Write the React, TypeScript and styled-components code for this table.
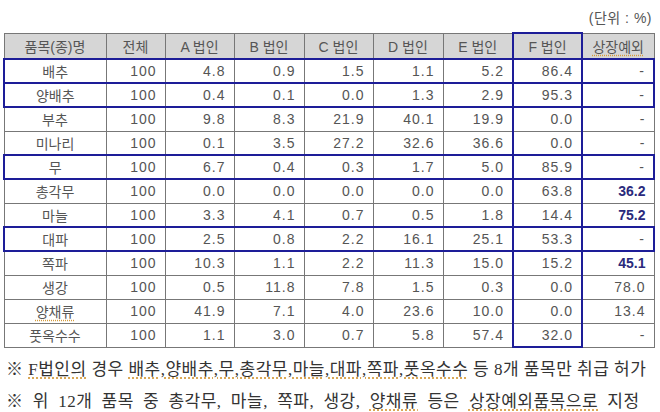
import React from 'react'
import styled, { createGlobalStyle } from 'styled-components'

type Row = {
    name: string
    vals: string[]
    hl?: boolean
    bold?: boolean
    squiggle?: boolean
}

const widths = [102, 59, 69, 70, 69, 70, 70, 69, 72]
const heads = ['품목(종)명', '전체', 'A 법인', 'B 법인', 'C 법인', 'D 법인', 'E 법인', 'F 법인', '상장예외']

const rows: Row[] = [
    { name: '배추', vals: ['100', '4.8', '0.9', '1.5', '1.1', '5.2', '86.4', '-'], hl: true },
    { name: '양배추', vals: ['100', '0.4', '0.1', '0.0', '1.3', '2.9', '95.3', '-'], hl: true },
    { name: '부추', vals: ['100', '9.8', '8.3', '21.9', '40.1', '19.9', '0.0', '-'] },
    { name: '미나리', vals: ['100', '0.1', '3.5', '27.2', '32.6', '36.6', '0.0', '-'] },
    { name: '무', vals: ['100', '6.7', '0.4', '0.3', '1.7', '5.0', '85.9', '-'], hl: true },
    { name: '총각무', vals: ['100', '0.0', '0.0', '0.0', '0.0', '0.0', '63.8', '36.2'], bold: true },
    { name: '마늘', vals: ['100', '3.3', '4.1', '0.7', '0.5', '1.8', '14.4', '75.2'], bold: true },
    { name: '대파', vals: ['100', '2.5', '0.8', '2.2', '16.1', '25.1', '53.3', '-'], hl: true },
    { name: '쪽파', vals: ['100', '10.3', '1.1', '2.2', '11.3', '15.0', '15.2', '45.1'], bold: true },
    { name: '생강', vals: ['100', '0.5', '11.8', '7.8', '1.5', '0.3', '0.0', '78.0'] },
    { name: '양채류', vals: ['100', '41.9', '7.1', '4.0', '23.6', '10.0', '0.0', '13.4'], squiggle: true },
    { name: '풋옥수수', vals: ['100', '1.1', '3.0', '0.7', '5.8', '57.4', '32.0', '-'] },
]

const BLUE = '#1d1d98'

const App = () => {
    return (
        <>
            <GlobalStyle />
            <Page>
                <UnitLine>(단위 : %)</UnitLine>
                <Table>
                    <colgroup>
                        {widths.map((w, i) => <col key={i} style={{ width: w }} />)}
                    </colgroup>
                    <thead>
                        <tr>
                            {heads.map((h, i) => (
                                <HeadCell key={h} $f={i === 7}>
                                    {i === 8 ? <Squiggle>{h}</Squiggle> : h}
                                </HeadCell>
                            ))}
                        </tr>
                    </thead>
                    <tbody>
                        {rows.map((r, ri) => (
                            <BodyRow key={r.name}>
                                <Cell $align='center' $hl={r.hl} $first>
                                    {r.squiggle ? <Squiggle>{r.name}</Squiggle> : r.name}
                                </Cell>
                                {r.vals.map((v, vi) => (
                                    <Cell
                                        key={vi}
                                        $align='right'
                                        $hl={r.hl}
                                        $f={vi === 6}
                                        $fLast={vi === 6 && ri === rows.length - 1}
                                        $last={vi === 7}
                                        $strong={vi === 7 && r.bold}
                                    >
                                        {v}
                                    </Cell>
                                ))}
                            </BodyRow>
                        ))}
                    </tbody>
                </Table>
                <Notes>
                    <Note>
                        ※ <Squiggle>F법인의</Squiggle> 경우 <Squiggle>배추,양배추,무,총각무,마늘,대파,쪽파,풋옥수수</Squiggle> 등 8개 품목만 취급 허가
                    </Note>
                    <Note $wide>
                        ※ 위 12개 품목 중 총각무, 마늘, 쪽파, 생강, <Squiggle>양채류</Squiggle> 등은 <Squiggle>상장예외품목으로</Squiggle> 지정
                    </Note>
                </Notes>
            </Page>
        </>
    )
}

const GlobalStyle = createGlobalStyle`
    body {
        margin: 0;
        background: #ffffff;
        font-family: "Liberation Sans", "Noto Sans CJK KR", sans-serif;
    }
`

const Page = styled.div`
    width: 660px;
    height: 412px;
    padding: 0 7px 0 3px;
    box-sizing: border-box;
    overflow: hidden;
`

const UnitLine = styled.div`
    height: 32px;
    display: flex;
    align-items: center;
    justify-content: flex-end;
    padding: 2px 1px 0 0;
    box-sizing: border-box;
    font-size: 14px;
    color: #555;
    letter-spacing: 0.5px;
`

const Table = styled.table`
    width: 650px;
    table-layout: fixed;
    border-collapse: collapse;
    border: 1px solid #444;
    font-size: 14px;
    color: #555;
`

const HeadCell = styled.th<{ $f?: boolean }>`
    height: 24px;
    padding: 0;
    background: #d6d6d6;
    font-weight: normal;
    color: #555;
    text-align: center;
    border: 1px solid #777;
    border-bottom-color: #444;
    ${p => p.$f && `
        border: 2px solid ${BLUE};
    `}
`

const BodyRow = styled.tr`
    height: 24px;
`

const Cell = styled.td<{
    $align: 'center' | 'right'
    $hl?: boolean
    $f?: boolean
    $fLast?: boolean
    $first?: boolean
    $last?: boolean
    $strong?: boolean
}>`
    padding: 0 ${p => (p.$align === 'right' ? '8px' : '0')} 0 0;
    text-align: ${p => p.$align};
    border: 1px solid #777;
    letter-spacing: ${p => (p.$align === 'right' ? '1px' : '0')};
    white-space: nowrap;
    ${p => p.$strong && `
        font-weight: bold;
        color: #2a2a7c;
        letter-spacing: 0;
    `}
    ${p => p.$f && `
        border-left: 2px solid ${BLUE};
        border-right: 2px solid ${BLUE};
    `}
    ${p => p.$fLast && `
        border-bottom: 2px solid ${BLUE};
    `}
    ${p => p.$hl && `
        border-top: 2px solid ${BLUE};
        border-bottom: 2px solid ${BLUE};
    `}
    ${p => p.$hl && p.$first && `
        border-left: 2px solid ${BLUE};
    `}
    ${p => p.$hl && p.$last && `
        border-right: 2px solid ${BLUE};
    `}
`

const Squiggle = styled.span`
    text-decoration: underline dotted #d49a3a;
    text-underline-offset: 3px;
`

const Notes = styled.div`
    display: flex;
    flex-direction: column;
    padding-top: 3px;
`

const Note = styled.div<{ $wide?: boolean }>`
    height: 32px;
    display: flex;
    align-items: center;
    padding-left: 3px;
    font-family: "Liberation Serif", "Noto Sans CJK KR", serif;
    font-size: 17px;
    color: #333;
    white-space: pre;
    letter-spacing: 0.5px;
    word-spacing: ${p => (p.$wide ? '4.5px' : '0')};
`

export default App
